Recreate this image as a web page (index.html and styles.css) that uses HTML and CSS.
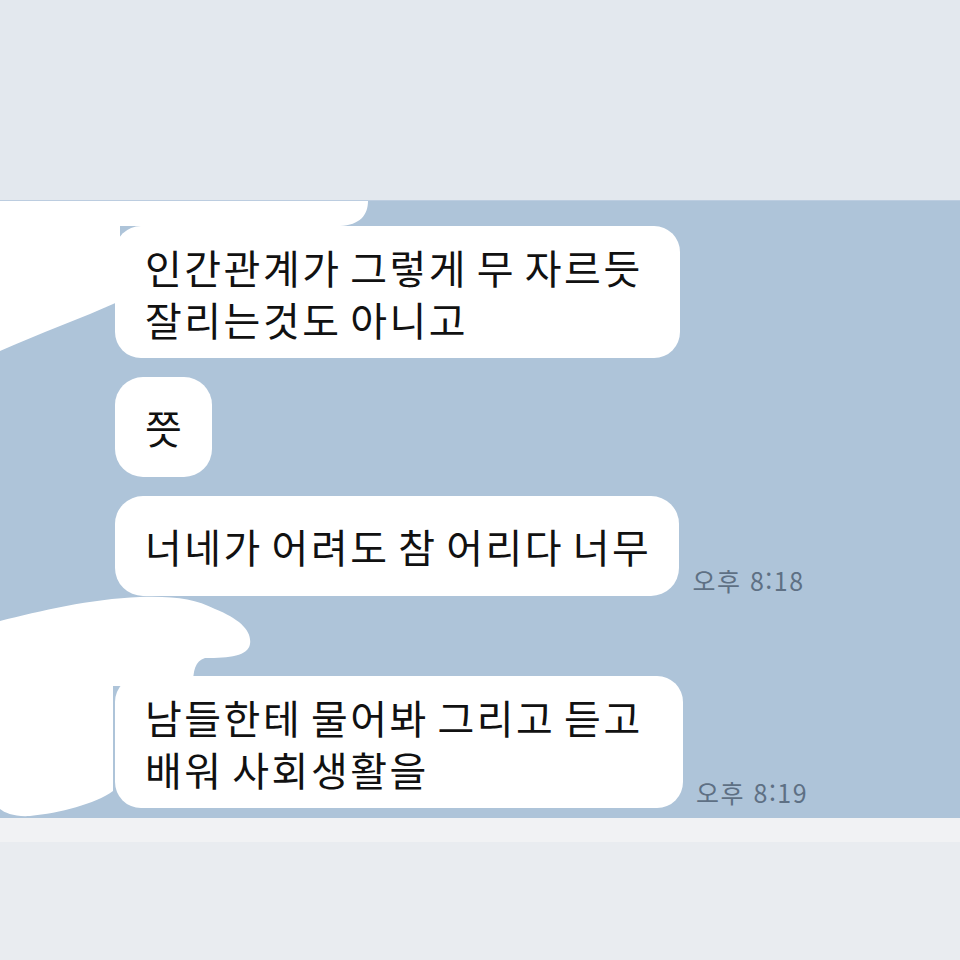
FILE: index.html
```html
<!DOCTYPE html>
<html lang="ko">
<head>
  <meta charset="UTF-8" />
  <meta name="viewport" content="width=device-width, initial-scale=1.0" />
  <title>대화</title>
  <link rel="stylesheet" href="styles.css">
</head>
<body>
  <div class="top-band"></div>

  <!-- CHAT -->
  <div class="chat">
    <svg class="redact" viewBox="0 0 960 618" width="960" height="618">
      <path d="M0 0 H368 C368 14 360 24 340 25 H120 V100 C80 118 40 132 0 150 Z" fill="#fff"/>
      <path d="M0 420 C40 410 90 398 140 396 C175 395 195 398 215 408 C240 418 252 430 250 443 C248 455 230 457 205 457 C195 460 193 470 193 485 H113 V590 C95 603 60 612 30 615 C15 616 5 612 0 608 Z" fill="#fff"/>
    </svg>

    <div class="group">
      <div class="row">
        <div class="bubble wide">인간관계가 그렇게 무 자르듯<br>잘리는것도 아니고</div>
      </div>
      <div class="row">
        <div class="bubble single">쯧</div>
      </div>
      <div class="row">
        <div class="bubble single">너네가 어려도 참 어리다 너무</div>
        <span class="time">오후 8:18</span>
      </div>
    </div>

    <div class="group second">
      <div class="row">
        <div class="bubble wide last">남들한테 물어봐 그리고 듣고<br>배워 사회생활을</div>
        <span class="time">오후 8:19</span>
      </div>
    </div>
  </div>

  <div class="bottom-band">
    <div class="strip"></div>
  </div>
</body>
</html>
```

FILE: styles.css
```css
body {
  margin: 0;
  font-family: "Noto Sans CJK KR", "Noto Sans", sans-serif;
  background: #e9ecf0;
}
.top-band {
  height: 200px;
  background: #e3e8ee;
}
.chat {
  position: relative;
  height: 618px;
  box-sizing: border-box;
  padding: 25px 0 0 115px;
  background: #aec4d9;
  border-top: 1px solid #bccde0;
}
.redact {
  position: absolute;
  top: 0;
  left: 0;
}
.group {
  display: flex;
  flex-direction: column;
  gap: 19px;
}
.group.second {
  margin-top: 80px;
}
.row {
  display: flex;
  align-items: flex-end;
}
.bubble {
  position: relative;
  background: #fff;
  color: #111;
  font-size: 40px;
  line-height: 52px;
  letter-spacing: 2.5px;
  word-spacing: -5px;
  padding: 15px 28px 13px 30px;
  border-radius: 26px;
  white-space: nowrap;
}
.bubble.wide {
  width: 565px;
  box-sizing: border-box;
}
.bubble.last {
  width: 568px;
}
.bubble.single {
  padding: 24px 28px 24px 30px;
  border-radius: 28px;
}
.time {
  margin: 0 0 1px 13px;
  font-size: 25px;
  line-height: 30px;
  letter-spacing: 1.5px;
  color: #5e7084;
}
.bottom-band {
  height: 142px;
}
.strip {
  height: 24px;
  background: #f1f2f4;
}
```
